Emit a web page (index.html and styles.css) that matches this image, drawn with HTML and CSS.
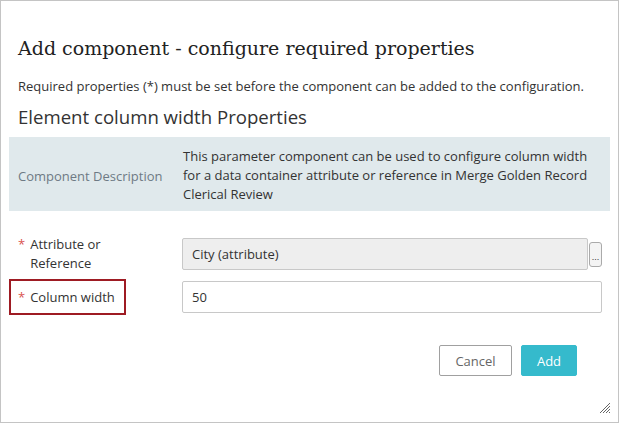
FILE: index.html
```html
<!DOCTYPE html>
<html>
<head>
<meta charset="utf-8">
<link rel="stylesheet" href="styles.css">
</head>
<body>
<div class="dialog">
  <h1 class="title">Add component - configure required properties</h1>
  <p class="intro">Required properties (*) must be set before the component can be added to the configuration.</p>
  <h2 class="heading">Element column width Properties</h2>
  <div class="desc">
    <div class="desc-label">Component Description</div>
    <div class="desc-text">This parameter component can be used to configure column width for a data container attribute or reference in Merge Golden Record Clerical Review</div>
  </div>
  <div class="form">
    <div class="row">
      <div class="label"><span class="req">*</span><span>Attribute or<br>Reference</span></div>
      <div class="field">
        <div class="input readonly">City (attribute)</div>
        <button class="browse">...</button>
      </div>
    </div>
    <div class="row">
      <div class="label"><span class="req">*</span><span>Column width</span><span class="mark"></span></div>
      <div class="field">
        <div class="input">50</div>
      </div>
    </div>
  </div>
  <div class="actions">
    <button class="btn cancel">Cancel</button>
    <button class="btn add">Add</button>
  </div>
  <svg class="grip" width="12" height="12" viewBox="0 0 12 12">
    <path d="M1 11 L11 1 M4 11 L11 4 M7 11 L11 7 M10 11 L11 10" stroke="#666" stroke-width="1" fill="none"/>
  </svg>
</div>
</body>
</html>
```
FILE: styles.css
```css
* { box-sizing: border-box; }
html, body { margin: 0; padding: 0; background: #fff; }
body { font-family: "Open Sans", "Noto Sans", sans-serif; font-size: 13px; color: #333; }
.dialog {
  position: relative;
  width: 619px;
  height: 423px;
  border: 1px solid #c4c4c4;
  padding: 0 8px;
  display: flex;
  flex-direction: column;
}
.title {
  margin: 34px 0 0 9px;
  font-family: "DejaVu Serif", "Liberation Serif", serif;
  font-weight: normal;
  font-size: 19px;
  line-height: 26px;
  color: #222;
}
.intro {
  margin: 15px 0 0 9px;
  font-size: 13px;
  line-height: 20px;
  color: #333;
}
.heading {
  margin: 8px 0 0 9px;
  font-weight: normal;
  font-size: 18.6px;
  line-height: 26px;
  color: #333;
}
.desc {
  margin-top: 7px;
  background: #e0e9ec;
  display: flex;
  padding: 10px 18px 7px 9px;
}
.desc-label {
  width: 165px;
  flex: none;
  align-self: center;
  color: #6e7a84;
}
.desc-text {
  line-height: 19px;
  color: #333;
}
.form {
  margin-top: 24px;
  padding-right: 8px;
  display: flex;
  flex-direction: column;
  gap: 8px;
}
.row {
  display: flex;
  align-items: center;
}
.label {
  position: relative;
  width: 173px;
  flex: none;
  padding-left: 9px;
  display: flex;
  gap: 5px;
  line-height: 19px;
  color: #333;
}
.req { color: #d9534f; }
.mark {
  position: absolute;
  left: 0;
  top: -9px;
  width: 117px;
  height: 36px;
  border: 2px solid #9e1b23;
}
.field {
  flex: 1;
  display: flex;
  align-items: center;
}
.input {
  flex: 1;
  height: 32px;
  border: 1px solid #c8c8c8;
  border-radius: 2px;
  padding: 0 9px;
  line-height: 30px;
  color: #333;
  background: #fff;
}
.input.readonly { background: #eeeeee; }
.browse {
  width: 13px;
  height: 25px;
  margin-left: 1px;
  padding: 0;
  border: 1px solid #aaa;
  border-radius: 3px;
  background: #f4f4f4;
  font-size: 9px;
  line-height: 1;
  color: #333;
  padding-top: 6px;
}
.actions {
  margin-top: 32px;
  display: flex;
  justify-content: flex-end;
  gap: 9px;
  padding-right: 33px;
}
.btn {
  height: 31px;
  font-family: inherit;
  font-size: 13px;
  border-radius: 2px;
  cursor: pointer;
}
.cancel {
  width: 73px;
  background: #fff;
  border: 1px solid #a0a0a0;
  color: #666;
}
.add {
  width: 56px;
  background: #35bacc;
  border: 1px solid #35bacc;
  color: #fff;
}
.grip {
  position: absolute;
  right: 7px;
  bottom: 8px;
}
```
